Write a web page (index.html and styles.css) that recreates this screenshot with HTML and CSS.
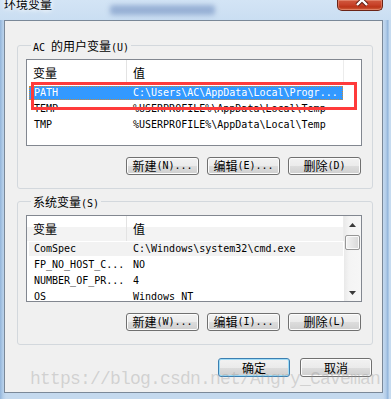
FILE: index.html
```html
<!DOCTYPE html>
<html lang="zh-CN">
<head>
<meta charset="utf-8">
<title>环境变量</title>
<link rel="stylesheet" href="styles.css">
</head>
<body>
<div class="screen">
  <div class="titlebar">
    <span class="title">环境变量</span>
    <div class="blur-bg"></div>
    <div class="close">
      <svg width="46" height="11" viewBox="0 0 46 11">
        <path d="M20 -5 L30 5 M30 -5 L20 5" stroke="#5a1b10" stroke-width="4.2" fill="none"/>
        <path d="M20 -5 L30 5 M30 -5 L20 5" stroke="#fff" stroke-width="2.4" fill="none"/>
      </svg>
    </div>
  </div>
  <div class="client">
    <fieldset class="group">
      <legend>AC <span class="zh">的用户变量</span>(U)</legend>
      <div class="list">
        <div class="lbody">
          <div class="hdr"><span class="c1 zh">变量</span><span class="c2 zh">值</span></div>
          <div class="row"><div class="in sel"><span class="c1">PATH</span><span class="c2">C:\Users\AC\AppData\Local\Progr...</span></div></div>
          <div class="row"><div class="in"><span class="c1">TEMP</span><span class="c2">%USERPROFILE%\AppData\Local\Temp</span></div></div>
          <div class="row"><div class="in"><span class="c1">TMP</span><span class="c2">%USERPROFILE%\AppData\Local\Temp</span></div></div>
        </div>
        <div class="redbox"></div>
      </div>
      <div class="btns">
        <button class="btn"><span class="zh">新建</span>(N)...</button>
        <button class="btn"><span class="zh">编辑</span>(E)...</button>
        <button class="btn"><span class="zh">删除</span>(D)</button>
      </div>
    </fieldset>
    <fieldset class="group">
      <legend><span class="zh">系统变量</span>(S)</legend>
      <div class="list">
        <div class="lbody">
          <div class="hdr shade"><span class="c1 zh">变量</span><span class="c2 zh">值</span></div>
          <div class="row"><div class="in hot"><span class="c1">ComSpec</span><span class="c2">C:\Windows\system32\cmd.exe</span></div></div>
          <div class="row"><div class="in"><span class="c1">FP_NO_HOST_C...</span><span class="c2">NO</span></div></div>
          <div class="row"><div class="in"><span class="c1">NUMBER_OF_PR...</span><span class="c2">4</span></div></div>
          <div class="row"><div class="in"><span class="c1">OS</span><span class="c2">Windows_NT</span></div></div>
        </div>
        <div class="vscroll">
          <div class="arr"><svg width="7" height="4" viewBox="0 0 7 4"><path d="M0 4 L3.5 0 L7 4Z" fill="#3a3a3a"/></svg></div>
          <div class="thumb"></div>
          <div class="track"></div>
          <div class="arr"><svg width="7" height="4" viewBox="0 0 7 4"><path d="M0 0 L3.5 4 L7 0Z" fill="#3a3a3a"/></svg></div>
        </div>
      </div>
      <div class="btns">
        <button class="btn"><span class="zh">新建</span>(W)...</button>
        <button class="btn"><span class="zh">编辑</span>(I)...</button>
        <button class="btn"><span class="zh">删除</span>(L)</button>
      </div>
    </fieldset>
    <div class="dlg">
      <button class="btn default"><span class="zh">确定</span></button>
      <button class="btn"><span class="zh">取消</span></button>
    </div>
  </div>
  <div class="mark">https://blog.csdn.net/Angry_Caveman</div>
</div>
</body>
</html>
```

FILE: styles.css
```css
html, body {
  margin: 0;
  padding: 0;
}
body {
  width: 391px;
  height: 399px;
  overflow: hidden;
  background: #bcd4ec;
}
.screen {
  width: 391px;
  height: 399px;
  position: relative;
  overflow: hidden;
  background: linear-gradient(90deg, #93b5da 0, #b4cee9 3px, #c4d9ee 6px, #c4d9ee 383px, #b3cde9 386px, #8fb2d8 388px, #c6dbf0 389px, #c6dbf0 391px);
  font-family: "DejaVu Sans Mono", "Noto Sans CJK SC", monospace;
  font-size: 10px;
  color: #000;
}
.zh {
  font-family: "Noto Sans CJK SC", sans-serif;
  font-size: 12px;
}
.titlebar {
  height: 20px;
  display: flex;
  align-items: flex-start;
  background: linear-gradient(180deg, #d3e4f5 0, #cadef2 100%);
}
.title {
  font-family: "Noto Sans CJK SC", sans-serif;
  font-size: 12px;
  line-height: 12px;
  margin: -2px 0 0 4px;
  text-shadow: 0 0 4px #fff, 0 0 6px #fff;
}
.blur-bg {
  width: 105px;
  height: 10px;
  margin: 5px 0 0 58px;
  background: rgba(35, 75, 150, 0.32);
  filter: blur(2.5px);
  border-radius: 3px;
}
.close {
  margin-left: auto;
  margin-right: 8px;
  width: 46px;
  height: 11px;
  box-sizing: border-box;
  border: 1px solid #6b2417;
  border-top: none;
  border-radius: 0 0 5px 5px;
  background: linear-gradient(180deg, #d05a3f 0, #c8432a 45%, #bb3519 70%, #d2623f 100%);
  box-shadow: inset 0 0 0 1px rgba(255, 200, 180, 0.35);
  overflow: hidden;
}
.close svg {
  display: block;
  margin: 0 -1px;
}
.client {
  margin-left: 4px;
  width: 379px;
  height: 373px;
  box-sizing: border-box;
  border: 1px solid #7a8898;
  background: #f0f0f0;
  padding: 18px 9px 0 12px;
}
.group {
  margin: 0;
  padding: 7px 10px 13px 8px;
  border: 1px solid #d3d8dd;
  border-radius: 3px;
  min-width: 0;
}
.group + .group {
  margin-top: 6px;
}
.group legend {
  padding: 0 2px;
  margin-left: 5px;
  height: 13px;
  line-height: 13px;
  white-space: nowrap;
}
.group legend .zh {
  line-height: 13px;
}
.list {
  position: relative;
  height: 87px;
  box-sizing: border-box;
  border: 1px solid #828790;
  background: #fff;
  display: flex;
}
.lbody {
  flex: 1;
  min-width: 0;
  overflow: hidden;
}
.hdr {
  height: 25px;
  display: flex;
  line-height: 25px;
}
.hdr.shade {
  background: linear-gradient(180deg, #fff 0, #fff 45%, #f3f3f3 45%, #f3f3f3 100%);
}
.hdr .c1 {
  width: 100px;
  box-sizing: border-box;
  padding-left: 6px;
  border-right: 1px solid #e3e3e3;
}
.hdr .c2 {
  width: 217px;
  box-sizing: border-box;
  padding-left: 6px;
  border-right: 1px solid #ececec;
}
.row {
  height: 16px;
  box-sizing: border-box;
  padding: 1px 0 1px 2px;
}
.in {
  display: flex;
  width: 314px;
  height: 14px;
  line-height: 14px;
  white-space: nowrap;
  box-sizing: border-box;
}
.in .c1 {
  width: 98px;
  padding-left: 5px;
  box-sizing: border-box;
  overflow: hidden;
}
.in .c2 {
  width: 216px;
  padding-left: 6px;
  box-sizing: border-box;
  overflow: hidden;
}
.in.sel {
  background: #3399ff;
  color: #fff;
  outline: 1px dotted #c98b3c;
  outline-offset: -1px;
}
.in.hot {
  background: #f2f2f2;
}
.redbox {
  position: absolute;
  left: 4px;
  top: 22px;
  width: 326px;
  height: 28px;
  box-sizing: border-box;
  border: 3px solid #ff3b3b;
}
.vscroll {
  width: 17px;
  display: flex;
  flex-direction: column;
  background: linear-gradient(90deg, #e9e9e9 0, #f4f4f4 30%, #f6f6f6 100%);
}
.arr {
  height: 17px;
  display: flex;
  align-items: center;
  justify-content: center;
}
.thumb {
  height: 15px;
  margin: 2px 1px 0 1px;
  box-sizing: border-box;
  border: 1px solid #979797;
  border-radius: 2px;
  background: linear-gradient(90deg, #f3f3f3 0, #e6e6e6 50%, #d8d8d8 100%);
  box-shadow: inset 0 0 0 1px #fafafa;
}
.track {
  flex: 1;
}
.btns {
  display: flex;
  justify-content: flex-end;
  gap: 8px;
  margin-top: 11px;
  margin-right: 1px;
}
.btn {
  width: 73px;
  height: 18px;
  box-sizing: border-box;
  border: 1px solid #707070;
  border-radius: 3px;
  background: linear-gradient(180deg, #f2f2f2 0, #ebebeb 50%, #dddddd 50%, #cfcfcf 100%);
  box-shadow: inset 0 0 0 1px #fcfcfc;
  font-family: "DejaVu Sans Mono", "Noto Sans CJK SC", monospace;
  font-size: 10px;
  color: #000;
  padding: 0;
  margin: 0;
  line-height: 16px;
  display: flex;
  align-items: center;
  justify-content: center;
  white-space: nowrap;
}
.btn .zh {
  line-height: 16px;
}
.dlg {
  display: flex;
  justify-content: flex-end;
  gap: 10px;
  margin-top: 13px;
  margin-right: 1px;
}
.dlg .btn {
  width: 72px;
  height: 19px;
}
.btn.default {
  border-color: #3c7fb1;
  box-shadow: inset 0 0 0 1px #9fdcf7;
}
.mark {
  position: absolute;
  left: 30px;
  top: 369px;
  font-family: "Liberation Mono", monospace;
  font-size: 18px;
  letter-spacing: -0.8px;
  line-height: 20px;
  color: rgba(150, 150, 150, 0.35);
  white-space: nowrap;
}
```
